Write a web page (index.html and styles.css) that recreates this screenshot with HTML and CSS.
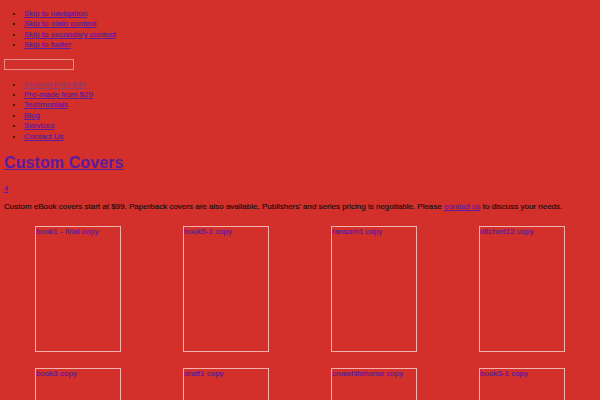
FILE: index.html
```html
<!DOCTYPE html>
<html lang="en">
<head>
    <meta charset="UTF-8">
    <meta name="viewport" content="width=device-width, initial-scale=1.0">
    <title>Custom Covers</title>
    <link rel="stylesheet" href="styles.css">
</head>
<body>
    <ul class="skip-links">
        <li><a href="#nav">Skip to navigation</a></li>
        <li><a href="#main">Skip to main content</a></li>
        <li><a href="#secondary">Skip to secondary content</a></li>
        <li><a href="#footer">Skip to footer</a></li>
    </ul>

    <form class="search-form">
        <input type="text" class="search-field" aria-label="Search">
    </form>

    <ul class="main-nav" id="nav">
        <li class="current"><a href="#">Custom from $99</a></li>
        <li><a href="#">Pre-made from $29</a></li>
        <li><a href="#">Testimonials</a></li>
        <li><a href="#">Blog</a></li>
        <li><a href="#">Services</a></li>
        <li><a href="#">Contact Us</a></li>
    </ul>

    <div id="main">
        <h1 class="entry-title"><a href="#">Custom Covers</a></h1>
        <p class="comments-link"><a href="#">4</a></p>
        <p>Custom eBook covers start at $99. Paperback covers are also available. Publishers' and series pricing is negotiable. Please <a href="#">contact us</a> to discuss your needs.</p>

        <div class="gallery">
            <div class="gallery-item"><a href="#" class="cover">book1 - final copy</a></div>
            <div class="gallery-item"><a href="#" class="cover">book5-1 copy</a></div>
            <div class="gallery-item"><a href="#" class="cover">ransom1 copy</a></div>
            <div class="gallery-item"><a href="#" class="cover">ditched12 copy</a></div>
            <div class="gallery-item"><a href="#" class="cover">book3 copy</a></div>
            <div class="gallery-item"><a href="#" class="cover">draft1 copy</a></div>
            <div class="gallery-item"><a href="#" class="cover">onawhitehorse copy</a></div>
            <div class="gallery-item"><a href="#" class="cover">book3-1 copy</a></div>
        </div>
    </div>
</body>
</html>
```

FILE: styles.css
```css
body {
    margin: 0 4px;
    background: #d4302b;
    color: #221111;
    font-family: "Liberation Sans", Arial, sans-serif;
    font-size: 8px;
    line-height: 1.3;
    -webkit-text-stroke: 0.2px currentColor;
}
a {
    color: #5a1ca0;
}
ul {
    margin: 8px 0;
    padding-left: 20px;
}
p {
    margin: 8px 0;
}
.skip-links {
    margin-top: 9px;
}
.search-form {
    margin: 8px 0 10px;
}
.search-field {
    display: block;
    box-sizing: border-box;
    width: 70px;
    height: 11px;
    margin: 0;
    padding: 0;
    border: 1px solid #ec8c86;
    background: transparent;
}
.main-nav {
    margin-top: 10px;
}
.main-nav .current a {
    color: #8e3a74;
}
.entry-title {
    margin: 10.7px 0;
    font-size: 16px;
    line-height: 1.3;
    letter-spacing: 0.1px;
    -webkit-text-stroke: 0;
}
.gallery {
    display: grid;
    grid-template-columns: repeat(4, 1fr);
    row-gap: 16px;
    margin-top: 13px;
}
.gallery-item {
    display: flex;
    justify-content: center;
}
.cover {
    box-sizing: border-box;
    width: 86px;
    height: 126px;
    border: 1px solid #f2b2ad;
    text-decoration: none;
    text-align: left;
}
```
